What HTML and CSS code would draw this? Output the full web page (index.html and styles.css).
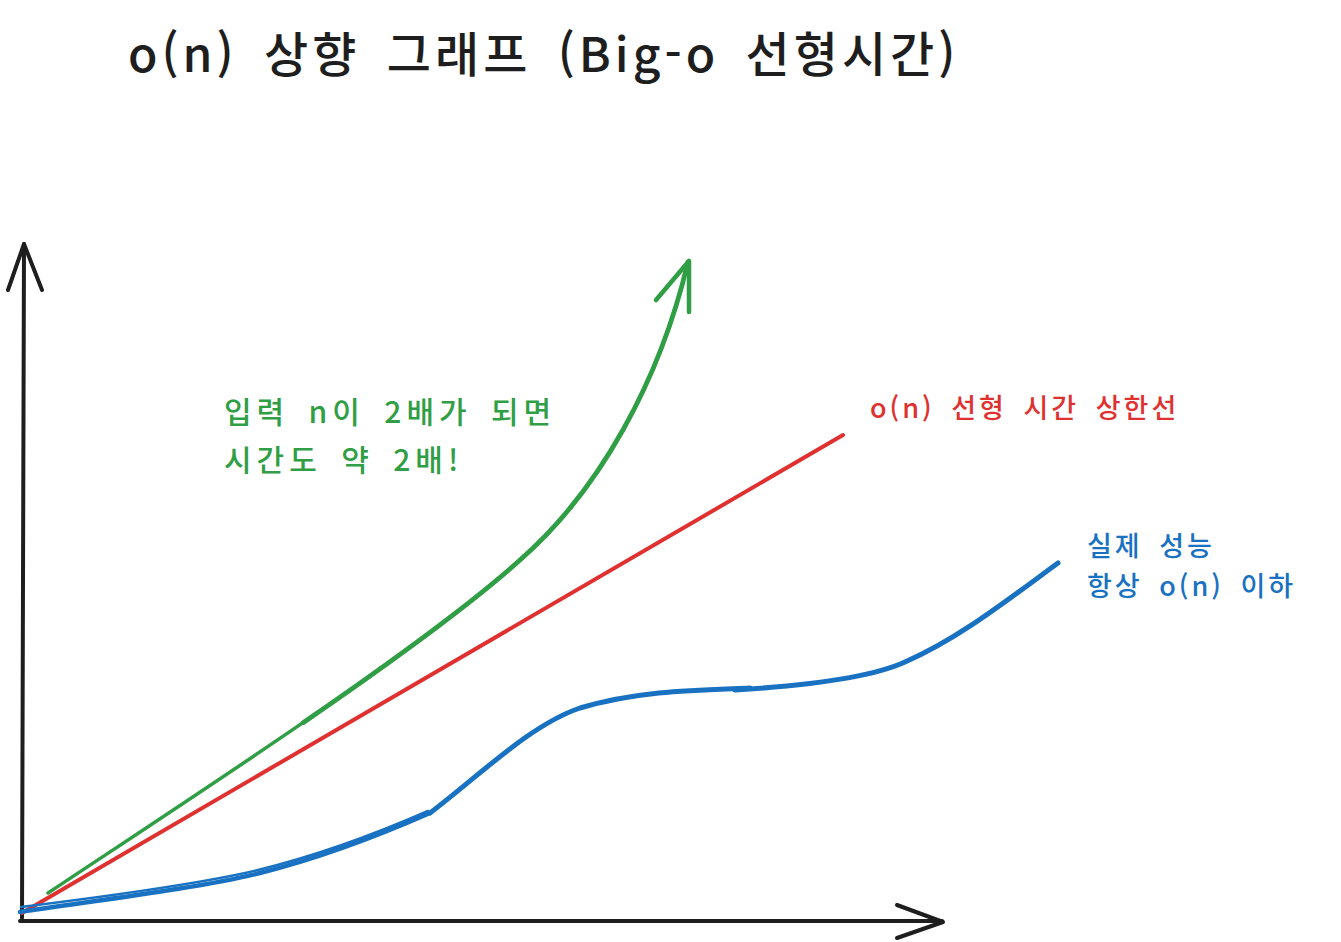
FILE: index.html
```html
<!DOCTYPE html>
<html lang="ko">
<head>
<meta charset="utf-8">
<title>o(n) 상향 그래프</title>
<link rel="stylesheet" href="styles.css">
</head>
<body>
<main class="canvas">
  <svg class="drawing" width="1341" height="942" viewBox="0 0 1341 942" xmlns="http://www.w3.org/2000/svg">
    <g fill="none" stroke-linecap="round" stroke-linejoin="round">
      <!-- y axis -->
      <g stroke="#1e1e1e" stroke-width="4">
        <path d="M22,918 L24,244"/>
        <path d="M8,290 L24,244 L42,290"/>
        <!-- x axis -->
        <path d="M20,921 L942,921"/>
        <path d="M897,905 L943,922 L897,938"/>
      </g>
      <!-- red line -->
      <path d="M22,913 L843,435" stroke="#e03131" stroke-width="4"/>
      <!-- green curve -->
      <g stroke="#2f9e44">
        <path d="M48,893 C200,792 420,650 520,560 C600,490 660,380 688,262" stroke-width="3.5"/>
        <path d="M303.5,722.4 C390,663 470,605 520,560 C600,490 660,380 688,262" stroke-width="4.8"/>
        <path d="M656,300 L689,261 L689,312" stroke-width="4.5"/>
      </g>
      <!-- blue curve -->
      <g stroke="#1971c2">
        <path d="M20,912 C100,900 200,888 260,873 C320,858 380,835 430,813" stroke-width="4.5"/>
        <path d="M21,907 C110,896 200,884 258,870 C320,855 380,832 428,811" stroke-width="2.5"/>
        <path d="M430,813 C480,775 530,725 580,708 C640,690 700,690 750,688" stroke-width="5"/>
        <path d="M735,690 C800,686 870,678 905,662 C960,638 1010,598 1058,563" stroke-width="5"/>
      </g>
    </g>
  </svg>

  <h1 class="title">o(n) 상향 그래프 (Big-o 선형시간)</h1>

  <p class="label label-green">입력 n이 2배가 되면<br>시간도 약 2배!</p>
  <p class="label label-red">o(n) 선형 시간 상한선</p>
  <p class="label label-blue">실제 성능<br>항상 o(n) 이하</p>
</main>
</body>
</html>
```

FILE: styles.css
```css
html, body {
  margin: 0;
  padding: 0;
  background: #ffffff;
}

body {
  font-family: "Noto Sans CJK KR", "Noto Sans", sans-serif;
  color: #1e1e1e;
}

.canvas {
  position: relative;
  width: 1341px;
  height: 942px;
  overflow: hidden;
}

.drawing {
  position: absolute;
  left: 0;
  top: 0;
  display: block;
}

.title {
  position: absolute;
  left: 128px;
  top: 19px;
  margin: 0;
  font-size: 48px;
  line-height: 64px;
  font-weight: 500;
  letter-spacing: 4px;
  word-spacing: 9px;
  white-space: nowrap;
  color: #1e1e1e;
}

.label {
  position: absolute;
  margin: 0;
  white-space: nowrap;
  font-weight: 500;
}

.label-green {
  left: 224px;
  top: 386px;
  font-size: 30px;
  line-height: 48px;
  letter-spacing: 5px;
  word-spacing: 6px;
  color: #2f9e44;
}

.label-red {
  left: 870px;
  top: 387px;
  font-size: 27px;
  line-height: 40px;
  letter-spacing: 3px;
  word-spacing: 6px;
  color: #e03131;
}

.label-blue {
  left: 1087px;
  top: 525px;
  font-size: 27px;
  line-height: 40px;
  letter-spacing: 3px;
  word-spacing: 6px;
  color: #1971c2;
}
```
